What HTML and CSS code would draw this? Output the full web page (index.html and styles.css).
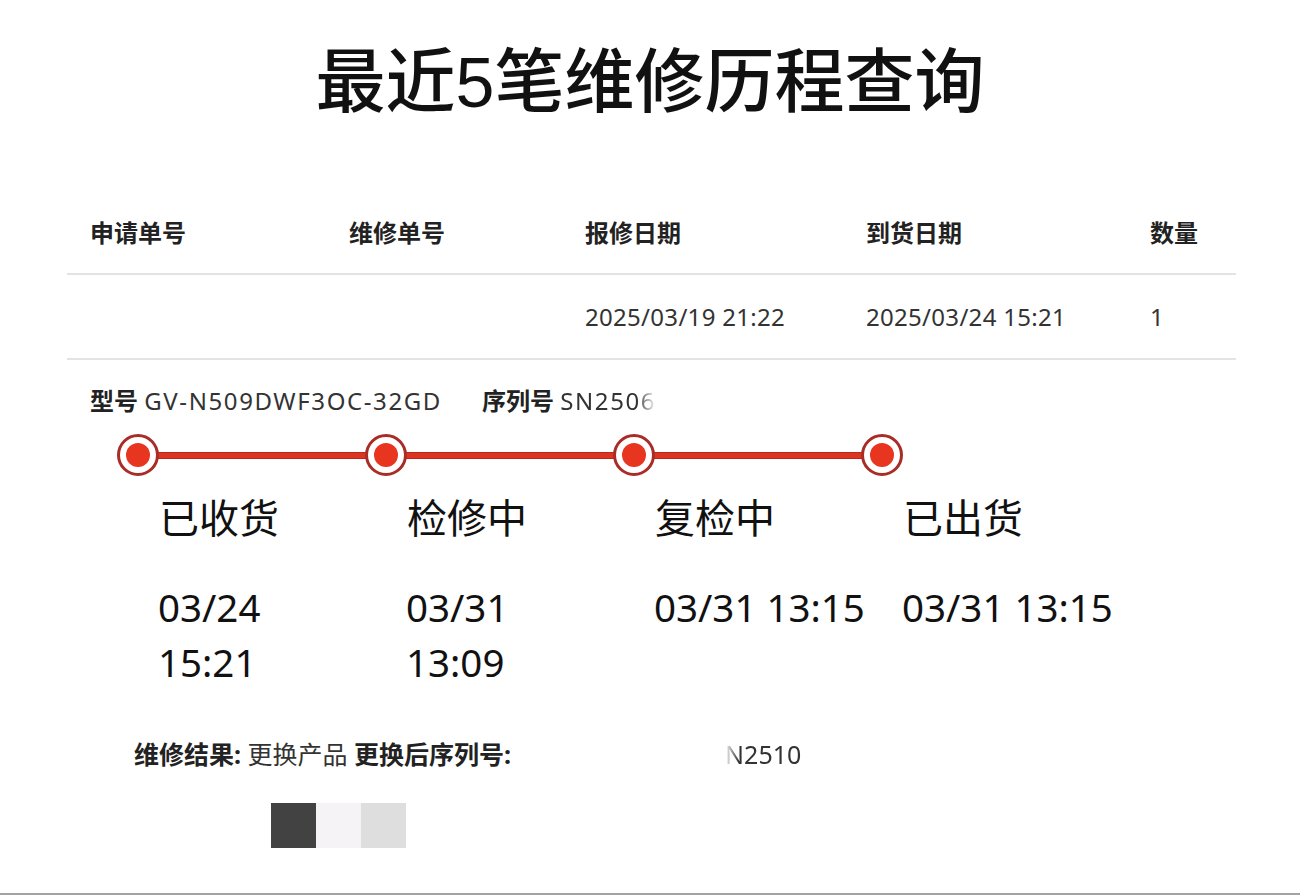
FILE: index.html
```html
<!DOCTYPE html>
<html lang="zh-CN">
<head>
<meta charset="utf-8">
<title>最近5笔维修历程查询</title>
<link rel="stylesheet" href="styles.css">
</head>
<body>
<div class="page">
  <h1 class="title">最近5笔维修历程查询</h1>

  <div class="table">
    <div class="row head">
      <div class="cell">申请单号</div>
      <div class="cell">维修单号</div>
      <div class="cell">报修日期</div>
      <div class="cell">到货日期</div>
      <div class="cell">数量</div>
    </div>
    <div class="row body">
      <div class="cell"></div>
      <div class="cell"></div>
      <div class="cell">2025/03/19 21:22</div>
      <div class="cell">2025/03/24 15:21</div>
      <div class="cell">1</div>
    </div>
  </div>

  <div class="model">
    <span class="item"><b>型号</b> <span class="val">GV-N509DWF3OC-32GD</span></span>
    <span class="item"><b>序列号</b> <span class="val fade-right">SN2506</span></span>
  </div>

  <div class="timeline">
    <div class="step">
      <div class="track"><span class="dot"></span><span class="bar"></span></div>
      <div class="label">已收货</div>
      <div class="time">03/24<br>15:21</div>
    </div>
    <div class="step">
      <div class="track"><span class="dot"></span><span class="bar"></span></div>
      <div class="label">检修中</div>
      <div class="time">03/31<br>13:09</div>
    </div>
    <div class="step">
      <div class="track"><span class="dot"></span><span class="bar"></span></div>
      <div class="label">复检中</div>
      <div class="time">03/31 13:15</div>
    </div>
    <div class="step last">
      <div class="track"><span class="dot"></span></div>
      <div class="label">已出货</div>
      <div class="time">03/31 13:15</div>
    </div>
  </div>

  <div class="result">
    <b>维修结果:</b> 更换产品 <b>更换后序列号:</b><span class="fade-left">N2510</span>
  </div>

  <div class="swatches">
    <span class="sw sw-dark"></span>
    <span class="sw sw-light"></span>
    <span class="sw sw-gray"></span>
  </div>
</div>
</body>
</html>
```
FILE: styles.css
```css
* { box-sizing: border-box; }

html, body {
  margin: 0;
  padding: 0;
  background: #ffffff;
}

body {
  font-family: "Noto Sans", "Noto Sans CJK SC", sans-serif;
  color: #222;
}

.page {
  height: 895px;
  border-bottom: 2px solid #a3a3a3;
  overflow: hidden;
}

.title {
  margin: 0;
  padding-top: 45px;
  line-height: 76px;
  font-size: 70px;
  font-weight: 500;
  text-align: center;
  color: #111;
  font-family: "Liberation Sans", "Noto Sans CJK SC", sans-serif;
}

.table {
  margin: 68px 0 0 67px;
  width: 1169px;
}

.row {
  display: grid;
  grid-template-columns: 259px 236px 281px 284px 1fr;
  border-bottom: 2px solid #e3e3e3;
  align-items: center;
}

.row.head { height: 86px; }
.row.body { height: 85px; }

.cell {
  padding-left: 23px;
  white-space: nowrap;
}

.head .cell {
  font-size: 24px;
  font-weight: 700;
  color: #222;
}

.body .cell {
  font-size: 24px;
  letter-spacing: 0.3px;
  color: #333;
}

.model {
  margin: 24px 0 0 90px;
  height: 34px;
  line-height: 34px;
  font-size: 24px;
  color: #333;
  display: flex;
  gap: 40px;
}

.model b {
  font-weight: 700;
  color: #222;
}

.model .val {
  font-size: 24px;
  letter-spacing: 1.6px;
}

.fade-right {
  display: inline-block;
  -webkit-mask-image: linear-gradient(to right, #000 80%, transparent 100%);
  mask-image: linear-gradient(to right, #000 80%, transparent 100%);
}

.timeline {
  margin: 16px 0 0 117px;
  display: flex;
}

.step {
  width: 248px;
  flex: none;
}

.track {
  display: flex;
  align-items: center;
  height: 42px;
}

.dot {
  width: 42px;
  height: 42px;
  flex: none;
  border-radius: 50%;
  border: 3px solid #a92d27;
  background: #fff;
  display: flex;
  align-items: center;
  justify-content: center;
  position: relative;
  z-index: 1;
}

.dot::after {
  content: "";
  width: 24px;
  height: 24px;
  border-radius: 50%;
  background: #e8351f;
}

.bar {
  flex: 1;
  height: 7px;
  margin: 0 -2px;
  background: #dc3420;
  border-top: 1px solid #b8291d;
  border-bottom: 1px solid #b8291d;
}

.label {
  margin-top: 14px;
  padding-left: 42px;
  font-size: 40px;
  line-height: 56px;
  color: #111;
  font-weight: 400;
}

.time {
  margin-top: 34px;
  padding-left: 41px;
  width: 280px;
  white-space: nowrap;
  font-size: 38.5px;
  line-height: 55px;
  color: #111;
}

.result {
  margin: 47px 0 0 134px;
  height: 34px;
  line-height: 34px;
  font-size: 25px;
  color: #333;
}

.result b {
  font-weight: 700;
  color: #222;
}

.fade-left {
  display: inline-block;
  margin-left: 214px;
  color: #333;
  -webkit-mask-image: linear-gradient(to right, transparent 0, #000 14px);
  mask-image: linear-gradient(to right, transparent 0, #000 14px);
}

.swatches {
  margin: 32px 0 0 271px;
  display: flex;
}

.sw {
  width: 45px;
  height: 45px;
  display: block;
}

.sw-dark { background: #424242; }
.sw-light { background: #f6f3f6; }
.sw-gray { background: #dedede; }
```
